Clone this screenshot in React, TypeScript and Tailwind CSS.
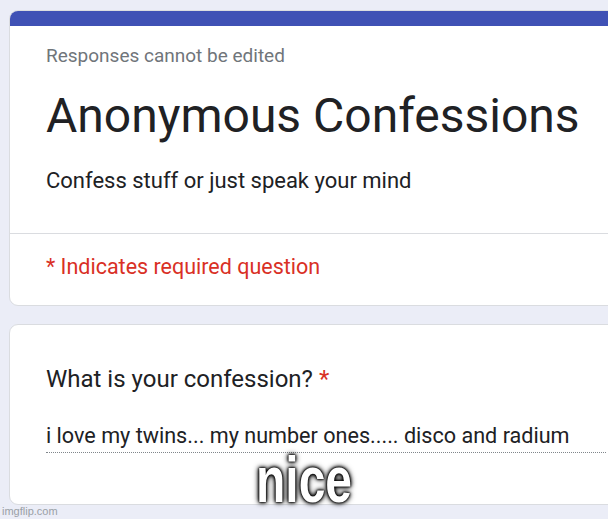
import React from 'react'

const App = () => {
  return (
    <div className="w-[608px] h-[519px] overflow-hidden bg-[#ebedf7] relative font-['Roboto',sans-serif] text-[#202124]">
      <div className="pt-[10px] pl-[9px] flex flex-col gap-[18px]">
        {/* header card */}
        <div className="w-[640px] bg-white rounded-[9px] border border-[#dadce0] overflow-hidden">
          <div className="h-[15px] bg-[#3f51b5]" />
          <div className="pl-[36px] pt-[18px] pb-[38px]">
            <p className="text-[19px] leading-[24px] text-[#70757a]">Responses cannot be edited</p>
            <h1 className="mt-[20px] text-[48px] leading-[56px]">Anonymous Confessions</h1>
            <p className="mt-[23px] text-[22px] leading-[28px]">Confess stuff or just speak your mind</p>
          </div>
          <div className="border-t border-[#dadce0] pl-[36px] pt-[19px] pb-[24px]">
            <p className="text-[21.5px] leading-[28px] text-[#d93025]">* Indicates required question</p>
          </div>
        </div>

        {/* question card */}
        <div className="w-[640px] h-[181px] bg-white rounded-[9px] border border-[#dadce0] pl-[36px] pt-[39px]">
          <p className="text-[24px] leading-[30px]">
            What is your confession? <span className="text-[#d93025]">*</span>
          </p>
          <div className="mt-[28px] w-[560px] border-b border-dotted border-[#80868b] pb-[2px]">
            <p className="text-[21.6px] leading-[28px]">i love my twins... my number ones..... disco and radium</p>
          </div>
        </div>
      </div>

      <p className="absolute left-[2px] bottom-[1px] text-[11px] leading-[13px] text-[#9aa0a6] font-['Liberation_Sans',sans-serif]">imgflip.com</p>

      <div className="absolute left-0 right-0 top-[448px] flex justify-center">
        <span className="inline-block scale-x-75 text-[64px] leading-[64px] font-bold text-white font-['Liberation_Sans',sans-serif] [text-shadow:0_0_2px_#000,0_0_3px_#000,0_0_5px_#000,0_0_7px_#000]">
          nice
        </span>
      </div>
    </div>
  )
}

export default App
